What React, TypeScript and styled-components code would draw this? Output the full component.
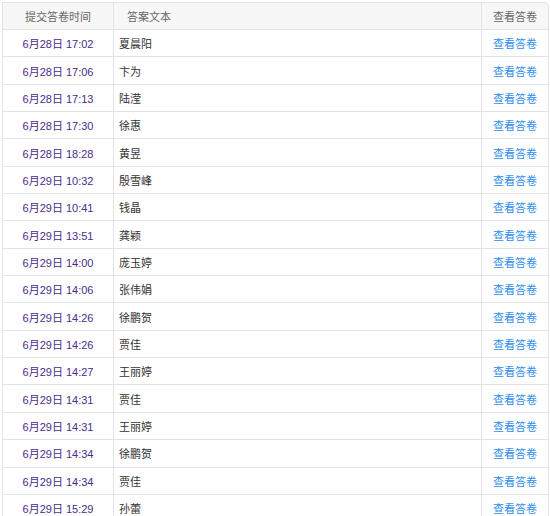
import React from "react";
import styled, { createGlobalStyle } from "styled-components";

const Global = createGlobalStyle`
  html, body { margin: 0; padding: 0; background: #fff; }
  body { font-family: "Liberation Sans", "Noto Sans CJK SC", sans-serif; font-size: 11px; }
`;

const Wrap = styled.div`
  padding: 2px 2px 0 2px;
`;

const Table = styled.table`
  width: 546px;
  border-collapse: separate;
  border-spacing: 0;
  border-top: 1px solid #e3e4e6;
  border-left: 1px solid #e3e4e6;
  border-top-right-radius: 4px;
  table-layout: fixed;
  font-size: 11px;
`;

const Th = styled.th<{ $align: "left" | "center"; $pad?: number }>`
  height: 27px;
  box-sizing: border-box;
  background: #f7f7f8;
  color: #666;
  font-weight: normal;
  font-size: 11px;
  text-align: ${(p) => p.$align};
  padding: 0 0 0 ${(p) => p.$pad ?? 0}px;
  border-right: 1px solid #e3e4e6;
  border-bottom: 1px solid #e3e4e6;
  &:last-child { border-top-right-radius: 4px; }
`;

const Td = styled.td<{ $align: "left" | "center"; $pad?: number }>`
  height: 27.35px;
  box-sizing: border-box;
  padding: 0 0 0 ${(p) => p.$pad ?? 0}px;
  text-align: ${(p) => p.$align};
  border-right: 1px solid #e3e4e6;
  border-bottom: 1px solid #e3e4e6;
  color: #333;
  white-space: nowrap;
`;

const DateLink = styled.span`
  color: #4a2c8c;
`;

const ViewLink = styled.a`
  color: #2d8cf0;
  text-decoration: none;
  cursor: pointer;
`;

const rows: [string, string][] = [
  ["6月28日 17:02", "夏晨阳"],
  ["6月28日 17:06", "卞为"],
  ["6月28日 17:13", "陆滢"],
  ["6月28日 17:30", "徐惠"],
  ["6月28日 18:28", "黄昱"],
  ["6月29日 10:32", "殷雪峰"],
  ["6月29日 10:41", "钱晶"],
  ["6月29日 13:51", "龚颖"],
  ["6月29日 14:00", "庞玉婷"],
  ["6月29日 14:06", "张伟娟"],
  ["6月29日 14:26", "徐鹏贺"],
  ["6月29日 14:26", "贾佳"],
  ["6月29日 14:27", "王丽婷"],
  ["6月29日 14:31", "贾佳"],
  ["6月29日 14:31", "王丽婷"],
  ["6月29日 14:34", "徐鹏贺"],
  ["6月29日 14:34", "贾佳"],
  ["6月29日 15:29", "孙蕾"],
];

export default function App() {
  return (
    <Wrap>
      <Global />
      <Table>
        <colgroup>
          <col style={{ width: 111 }} />
          <col style={{ width: 368 }} />
          <col style={{ width: 67 }} />
        </colgroup>
        <thead>
          <tr>
            <Th $align="center">提交答卷时间</Th>
            <Th $align="left" $pad={13}>答案文本</Th>
            <Th $align="center">查看答卷</Th>
          </tr>
        </thead>
        <tbody>
          {rows.map(([d, n], i) => (
            <tr key={i}>
              <Td $align="center"><DateLink>{d}</DateLink></Td>
              <Td $align="left" $pad={5}>{n}</Td>
              <Td $align="center"><ViewLink>查看答卷</ViewLink></Td>
            </tr>
          ))}
        </tbody>
      </Table>
    </Wrap>
  );
}
